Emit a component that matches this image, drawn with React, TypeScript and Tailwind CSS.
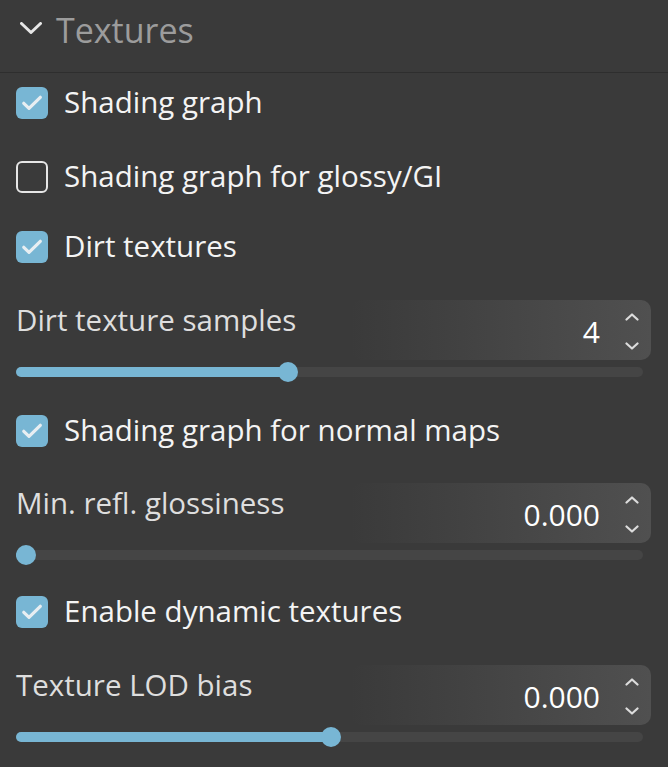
import React from 'react';

const font = { fontFamily: '"Open Sans", "Noto Sans", sans-serif' };

function Check({ checked, label, className }: { checked: boolean; label: string; className?: string }) {
  return (
    <div className={`flex items-center h-[32px] ${className ?? ''}`}>
      {checked ? (
        <div className="w-[32px] h-[32px] rounded-[6px] bg-[#78b6d4] flex items-center justify-center">
          <svg width="20" height="16" viewBox="0 0 20 16" fill="none">
            <path d="M1.8 8.3 L7 13.3 L18.3 2.3" stroke="#e8eef2" strokeWidth="3.2" strokeLinecap="round" strokeLinejoin="round" />
          </svg>
        </div>
      ) : (
        <div className="w-[32px] h-[32px] rounded-[6px] border-[2.5px] border-[#e6e6e6]" />
      )}
      <span className="ml-[16px] pb-[2px] text-[29.5px] text-[#f4f4f4] leading-none whitespace-nowrap">{label}</span>
    </div>
  );
}

function NumberSlider({ label, value, pct, className }: { label: string; value: string; pct: number; className?: string }) {
  return (
    <div className={className}>
      <div className="flex h-[60px]">
        <div className="flex-1 pl-[16px] pt-[3px] text-[29.5px] text-[#dedede] leading-[34px] whitespace-nowrap">{label}</div>
        <div className="w-[300px] mr-[17px] rounded-[10px] bg-gradient-to-r from-[#3a3a3a] to-[#505050] flex items-center justify-end">
          <span className="text-[30px] text-white leading-none pt-[3px]">{value}</span>
          <div className="flex flex-col items-center justify-center gap-[21px] w-[38px] ml-[13px] pt-[2px]">
            <svg width="14" height="8" viewBox="0 0 14 8" fill="none">
              <path d="M1.5 6.5 L7 1.5 L12.5 6.5" stroke="#dcdcdc" strokeWidth="2.2" strokeLinecap="round" strokeLinejoin="round" />
            </svg>
            <svg width="14" height="8" viewBox="0 0 14 8" fill="none">
              <path d="M1.5 1.5 L7 6.5 L12.5 1.5" stroke="#dcdcdc" strokeWidth="2.2" strokeLinecap="round" strokeLinejoin="round" />
            </svg>
          </div>
        </div>
      </div>
      <div className="relative h-[10px] mt-[7px] ml-[16px] mr-[25px] rounded-full bg-[#454545]">
        <div className="absolute left-0 top-0 h-[10px] rounded-full bg-[#78b6d4]" style={{ width: `${pct}%` }} />
        <div
          className="absolute top-[-5px] w-[20px] h-[20px] rounded-full bg-[#78b6d4] -translate-x-1/2"
          style={{ left: `${pct}%` }}
        />
      </div>
    </div>
  );
}

export default function App() {
  return (
    <div className="w-[668px] h-[767px] bg-[#3a3a3a] overflow-hidden" style={font}>
      <div className="h-[73px] flex items-start border-b border-[#2e2e2e]">
        <div className="flex items-center h-[60px]">
          <svg className="ml-[20px] mb-[4px]" width="22" height="12" viewBox="0 0 22 12" fill="none">
            <path d="M1.5 1.5 L11 10.5 L20.5 1.5" stroke="#e6e6e6" strokeWidth="3" strokeLinecap="round" strokeLinejoin="round" />
          </svg>
          <span className="ml-[14px] text-[34px] text-[#9c9c9c] leading-none">Textures</span>
        </div>
      </div>
      <div className="pl-[16px]">
        <Check checked label="Shading graph" className="mt-[14px]" />
        <Check checked={false} label="Shading graph for glossy/GI" className="mt-[42px]" />
        <Check checked label="Dirt textures" className="mt-[38px]" />
      </div>
      <NumberSlider label="Dirt texture samples" value="4" pct={43.4} className="mt-[37px]" />
      <div className="pl-[16px]">
        <Check checked label="Shading graph for normal maps" className="mt-[38px]" />
      </div>
      <NumberSlider label="Min. refl. glossiness" value="0.000" pct={1.6} className="mt-[36px]" />
      <div className="pl-[16px]">
        <Check checked label="Enable dynamic textures" className="mt-[36px]" />
      </div>
      <NumberSlider label="Texture LOD bias" value="0.000" pct={50.2} className="mt-[37px]" />
    </div>
  );
}
